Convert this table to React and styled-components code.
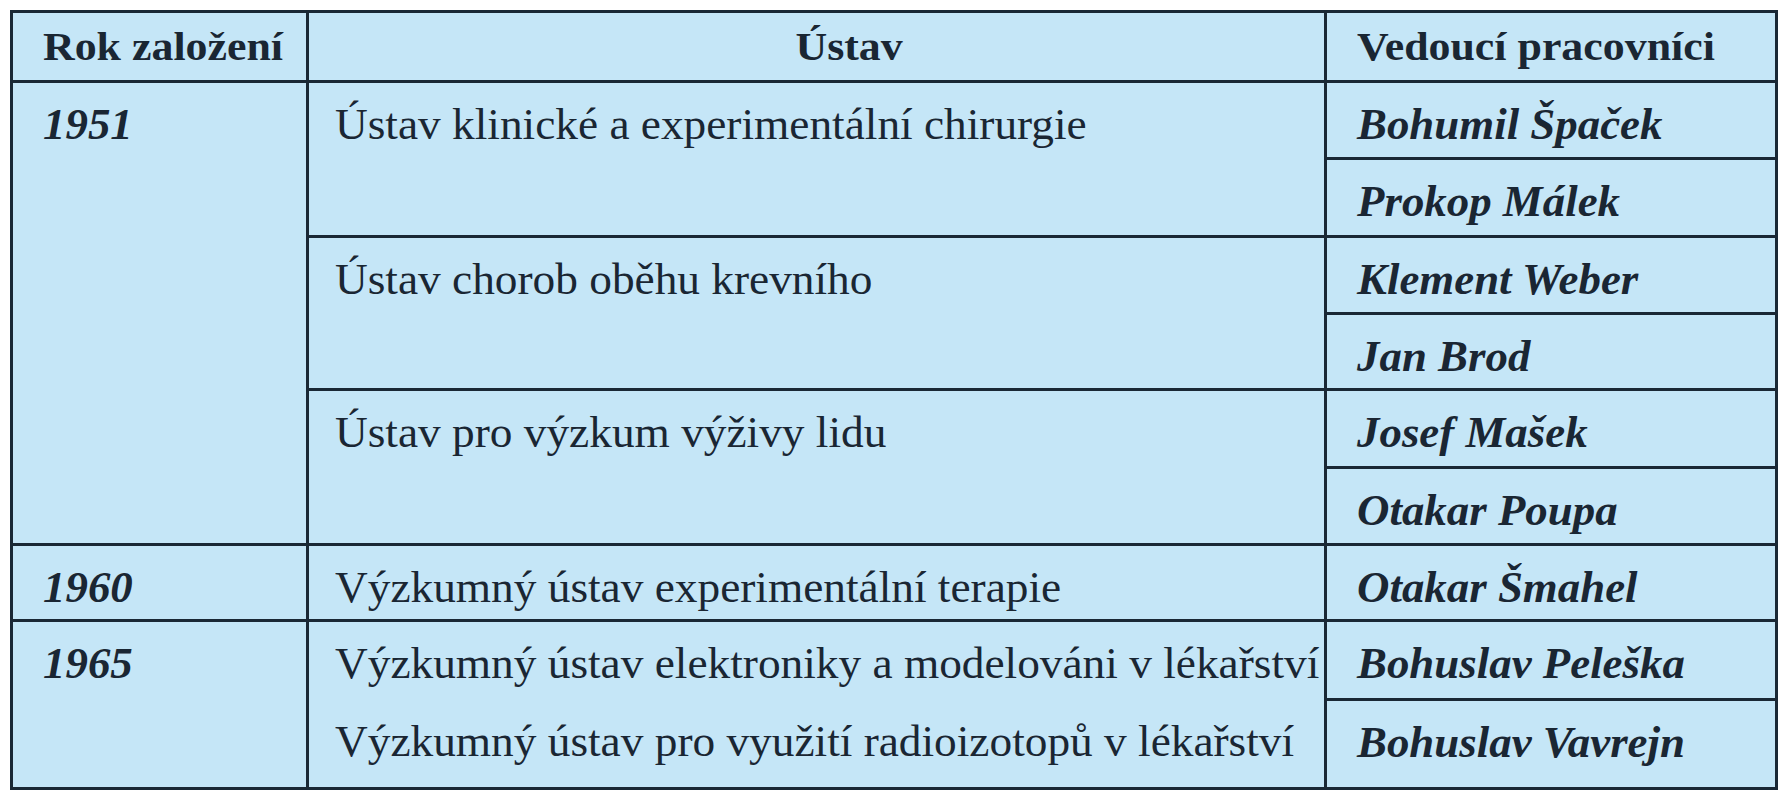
import React from "react";
import styled, { createGlobalStyle } from "styled-components";

const GlobalStyle = createGlobalStyle`
  html, body { margin: 0; padding: 0; background: #ffffff; }
  body { font-family: "Liberation Serif", "Times New Roman", serif; }
`;

const LINE = "#1a2835";

const Page = styled.div`
  padding: 10px 0 0 10px;
`;

const Table = styled.table`
  border-collapse: collapse;
  table-layout: fixed;
  width: 1765px;
  background: #c5e6f7;
  color: #1a2633;
`;

const Row = styled.tr`
  height: ${(p) => p.$h}px;
`;

const Head = styled.th`
  border: 3px solid ${LINE};
  padding: 13px 0 0 ${(p) => p.$pl}px;
  vertical-align: top;
  text-align: ${(p) => (p.$center ? "center" : "left")};
  font-weight: 700;
`;

const Cell = styled.td`
  border: 3px solid ${LINE};
  ${(p) => p.$openBottom && "border-bottom: none;"}
  ${(p) => p.$openTop && "border-top: none;"}
  padding: ${(p) => p.$pt}px 0 0 ${(p) => p.$pl}px;
  vertical-align: top;
`;

const HeadText = styled.span`
  display: inline-block;
  white-space: nowrap;
  font-size: 41px;
  line-height: 41px;
  font-weight: 700;
  transform: scaleX(1.07);
  transform-origin: ${(p) => (p.$center ? "50%" : "0")} 50%;
`;

const Plain = styled.span`
  display: inline-block;
  white-space: nowrap;
  font-size: 44px;
  line-height: 44px;
  font-weight: 400;
  transform: scaleX(1.03);
  transform-origin: 0 50%;
`;

const Emph = styled(Plain)`
  font-style: italic;
  font-weight: 700;
  transform: scaleX(1.02);
`;

const groups = [
  {
    year: "1951",
    institutes: [
      { name: "Ústav klinické a experimentální chirurgie", people: ["Bohumil Špaček", "Prokop Málek"] },
      { name: "Ústav chorob oběhu krevního", people: ["Klement Weber", "Jan Brod"] },
      { name: "Ústav pro výzkum výživy lidu", people: ["Josef Mašek", "Otakar Poupa"] },
    ],
  },
  {
    year: "1960",
    institutes: [{ name: "Výzkumný ústav experimentální terapie", people: ["Otakar Šmahel"] }],
  },
  {
    year: "1965",
    institutes: [
      { name: "Výzkumný ústav elektroniky a modelováni v lékařství", people: ["Bohuslav Peleška"], openBottom: true },
      { name: "Výzkumný ústav pro využití radioizotopů v lékařství", people: ["Bohuslav Vavrejn"], openTop: true },
    ],
  },
];

const heights = [77, 78, 77, 76, 78, 77, 76, 79, 89];
const PAD = 20;
const LAST_PAD = 20;

export default function App() {
  const rows = [];
  let idx = 0;
  groups.forEach((g) => {
    const groupSpan = g.institutes.reduce((n, i) => n + i.people.length, 0);
    g.institutes.forEach((inst, ii) => {
      inst.people.forEach((person, pi) => {
        const h = heights[idx];
        const pt = idx === heights.length - 1 ? LAST_PAD : PAD;
        rows.push(
          <Row key={idx} $h={h}>
            {ii === 0 && pi === 0 && (
              <Cell rowSpan={groupSpan} $pt={PAD} $pl={30}>
                <Emph>{g.year}</Emph>
              </Cell>
            )}
            {pi === 0 && (
              <Cell
                rowSpan={inst.people.length}
                $pt={pt}
                $pl={26}
                $openBottom={inst.openBottom}
                $openTop={inst.openTop}
              >
                <Plain>{inst.name}</Plain>
              </Cell>
            )}
            <Cell $pt={pt} $pl={30}>
              <Emph>{person}</Emph>
            </Cell>
          </Row>
        );
        idx += 1;
      });
    });
  });

  return (
    <>
      <GlobalStyle />
      <Page>
        <Table>
          <colgroup>
            <col style={{ width: 296 }} />
            <col style={{ width: 1018 }} />
            <col style={{ width: 451 }} />
          </colgroup>
          <thead>
            <Row $h={70}>
              <Head $pl={30}>
                <HeadText>Rok založení</HeadText>
              </Head>
              <Head $pl={66} $center>
                <HeadText $center>Ústav</HeadText>
              </Head>
              <Head $pl={30}>
                <HeadText>Vedoucí pracovníci</HeadText>
              </Head>
            </Row>
          </thead>
          <tbody>{rows}</tbody>
        </Table>
      </Page>
    </>
  );
}
